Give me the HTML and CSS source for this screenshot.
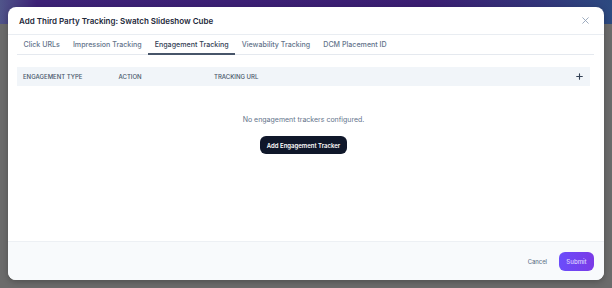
FILE: index.html
```html
<!DOCTYPE html>
<html>
<head>
    <meta charset="UTF-8">
    <title>Add Third Party Tracking</title>
    <link rel="stylesheet" href="styles.css">
</head>
<body>
    <div class="page-header"></div>

    <div class="modal">
        <div class="modal-header">
            <h2>Add Third Party Tracking: Swatch Slideshow Cube</h2>
            <button class="close" aria-label="Close">
                <svg width="7" height="7" viewBox="0 0 10 10">
                    <path d="M1 1L9 9M9 1L1 9" stroke="#94a3b8" stroke-width="1.3" stroke-linecap="round"/>
                </svg>
            </button>
        </div>

        <div class="tabs">
            <div class="tab">Click URLs</div>
            <div class="tab">Impression Tracking</div>
            <div class="tab active">Engagement Tracking</div>
            <div class="tab">Viewability Tracking</div>
            <div class="tab">DCM Placement ID</div>
        </div>

        <div class="modal-body">
            <div class="table-head">
                <div>Engagement Type</div>
                <div>Action</div>
                <div>Tracking URL</div>
                <div class="add-row">
                    <svg width="7" height="7" viewBox="0 0 10 10">
                        <path d="M5 1V9M1 5H9" stroke="#334155" stroke-width="1.6" stroke-linecap="round"/>
                    </svg>
                </div>
            </div>

            <div class="empty">
                <p>No engagement trackers configured.</p>
                <button class="btn-dark">Add Engagement Tracker</button>
            </div>
        </div>

        <div class="modal-footer">
            <button class="btn-cancel">Cancel</button>
            <button class="btn-submit">Submit</button>
        </div>
    </div>
</body>
</html>
```

FILE: styles.css
```css
body {
    font-family: Inter, "Noto Sans", sans-serif;
    margin: 0;
    height: 288px;
    background-color: #6b6b6b;
    overflow: hidden;
}

.page-header {
    height: 24px;
    background: linear-gradient(to right, #50558a 0%, #3d2277 6%, #3b1e72 70%, #33357a 88%, #2c4a80 100%);
}

.modal {
    position: absolute;
    top: 7px;
    left: 8px;
    width: 596px;
    height: 273px;
    background-color: #fff;
    border-radius: 8px;
    display: flex;
    flex-direction: column;
    overflow: hidden;
    box-shadow: 0 2px 6px rgba(0, 0, 0, 0.25);
}

.modal-header {
    height: 28px;
    border-bottom: 1px solid #e9edf2;
    display: flex;
    align-items: center;
    justify-content: space-between;
    padding: 0 14px 0 11px;
    box-sizing: border-box;
}

.modal-header h2 {
    margin: 0;
    font-size: 8px;
    font-weight: 600;
    color: #1e293b;
}

.close {
    background: none;
    border: none;
    padding: 0;
    width: 10px;
    height: 10px;
    display: flex;
    align-items: center;
    justify-content: center;
}

.tabs {
    display: flex;
    margin: 0 10px 0 9px;
    border-bottom: 1px solid #e5e9ef;
    height: 19px;
}

.tab {
    padding: 0 6.5px;
    font-size: 7.1px;
    font-weight: 500;
    color: #64748b;
    display: flex;
    align-items: center;
    border-bottom: 2px solid transparent;
    margin-bottom: -1px;
}

.tab.active {
    color: #334155;
    border-bottom-color: #475569;
}

.modal-body {
    flex: 1;
    padding: 12px 14px 0 9px;
}

.table-head {
    display: grid;
    grid-template-columns: 95.5px 95.5px 1fr 20px;
    align-items: center;
    height: 19px;
    background-color: #f1f5f9;
    font-size: 6px;
    font-weight: 500;
    color: #475569;
    text-transform: uppercase;
}

.table-head div {
    padding-left: 6px;
}

.add-row {
    display: flex;
    align-items: center;
}

.empty {
    display: flex;
    flex-direction: column;
    align-items: center;
    padding-top: 29px;
}

.empty p {
    margin: 0 0 11px;
    font-size: 7px;
    line-height: 10px;
    color: #64748b;
}

.btn-dark {
    background-color: #0f172a;
    color: #fff;
    border: none;
    border-radius: 6px;
    height: 18px;
    padding: 0 7px;
    font-family: inherit;
    font-size: 6px;
    font-weight: 600;
}

.modal-footer {
    height: 39px;
    border-top: 1px solid #edf0f4;
    background-color: #f8fafc;
    display: flex;
    align-items: center;
    justify-content: flex-end;
    gap: 11px;
    padding: 0 10px;
    box-sizing: border-box;
}

.btn-cancel {
    background: none;
    border: none;
    font-family: inherit;
    font-size: 5.8px;
    font-weight: 500;
    color: #64748b;
    padding: 0 1px;
}

.btn-submit {
    background: linear-gradient(to right, #6b4dfb, #7a3ae6);
    color: #ddd3ff;
    border: none;
    border-radius: 6px;
    height: 19px;
    width: 35px;
    padding: 0;
    font-family: inherit;
    font-size: 6.1px;
    font-weight: 500;
}
```
